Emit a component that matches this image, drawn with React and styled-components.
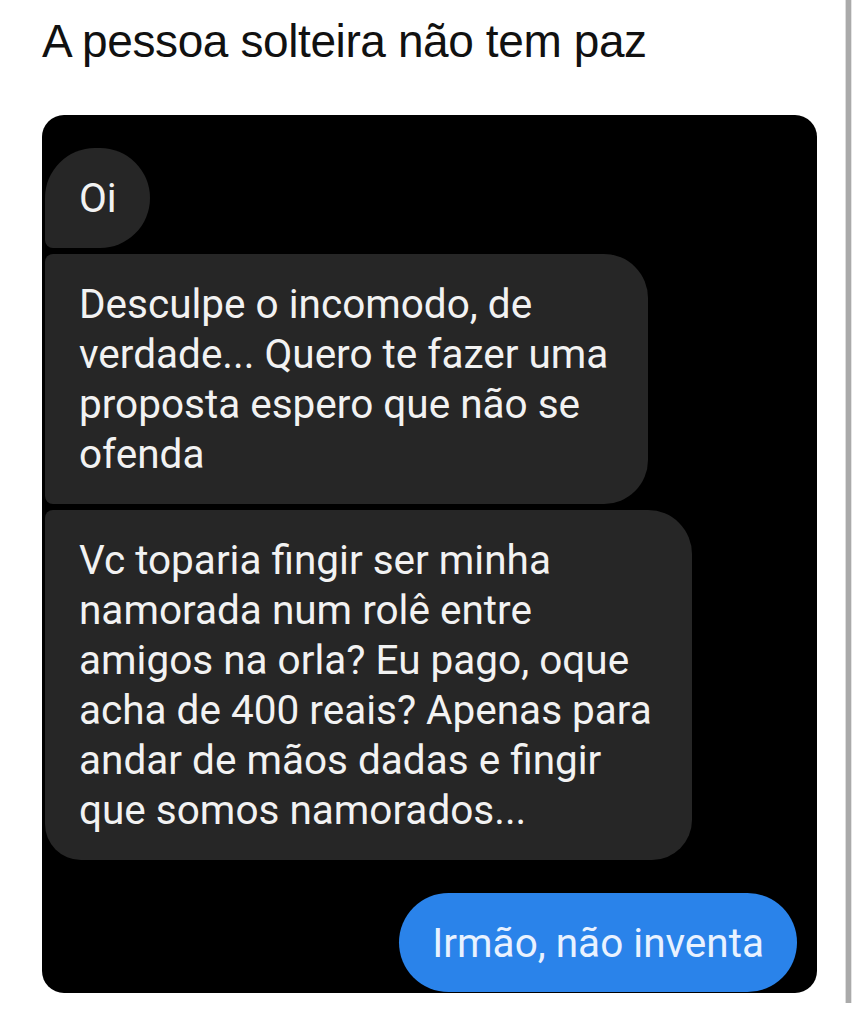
import styled, { createGlobalStyle } from 'styled-components';

const GlobalStyle = createGlobalStyle`
  html, body {
    margin: 0;
    padding: 0;
    background: #ffffff;
  }
  * {
    box-sizing: border-box;
  }
`;

const messages = [
  { id: 1, kind: 'first', lines: ['Oi'] },
  { id: 2, kind: 'middle', lines: ['Desculpe o incomodo, de', 'verdade... Quero te fazer uma', 'proposta espero que não se', 'ofenda'] },
  { id: 3, kind: 'last', lines: ['Vc toparia fingir ser minha', 'namorada num rolê entre', 'amigos na orla? Eu pago, oque', 'acha de 400 reais? Apenas para', 'andar de mãos dadas e fingir', 'que somos namorados...'] },
];

const corners = {
  first: '50px 50px 50px 8px',
  middle: '8px 44px 44px 8px',
  last: '8px 44px 40px 36px',
};

const padRight = {
  first: 33,
  middle: 40,
  last: 40,
};

export default function App() {
  return (
    <Page>
      <GlobalStyle />
      <Content>
        <Title>A pessoa solteira não tem paz</Title>
        <Chat>
          <Incoming>
            {messages.map(m => (
              <Bubble key={m.id} $corners={corners[m.kind]} $padRight={padRight[m.kind]}>
                {m.lines.map((line, i) => (
                  <Line key={i}>{line}</Line>
                ))}
              </Bubble>
            ))}
          </Incoming>
          <Outgoing>
            <SentBubble>Irmão, não inventa</SentBubble>
          </Outgoing>
        </Chat>
      </Content>
      <ScrollRail />
    </Page>
  );
}

const Page = styled.div`
  display: flex;
  width: 858px;
  height: 1024px;
  overflow: hidden;
`;

const Content = styled.div`
  width: 845px;
  padding: 13px 0 0 42px;
  display: flex;
  flex-direction: column;
`;

const Title = styled.h1`
  margin: 0 0 0 0;
  font-family: "Liberation Sans", Arial, sans-serif;
  font-weight: 400;
  font-size: 46px;
  line-height: 56px;
  color: #111111;
  letter-spacing: -0.4px;
`;

const Chat = styled.div`
  margin-top: 46px;
  width: 775px;
  height: 878px;
  background: #000000;
  border-radius: 22px;
  padding: 33px 20px 1px 3px;
  display: flex;
  flex-direction: column;
  justify-content: space-between;
`;

const Incoming = styled.div`
  display: flex;
  flex-direction: column;
  align-items: flex-start;
  gap: 6px;
`;

const Bubble = styled.div`
  background: #262626;
  color: #f2f2f2;
  border-radius: ${p => p.$corners};
  padding: 25px ${p => p.$padRight}px 25px 34px;
  font-family: Roboto, "Noto Sans", sans-serif;
  font-size: 40.5px;
  line-height: 50px;
  white-space: nowrap;
`;

const Line = styled.div``;

const Outgoing = styled.div`
  display: flex;
  justify-content: flex-end;
`;

const SentBubble = styled.div`
  background: #2a83ea;
  color: #e9f2ff;
  border-radius: 50px;
  padding: 25px 33px 24px;
  font-family: Roboto, "Noto Sans", sans-serif;
  font-size: 40.5px;
  line-height: 50px;
  white-space: nowrap;
`;

const ScrollRail = styled.div`
  width: 7px;
  height: 1003px;
  background: #aaaaaa;
  border-left: 1px solid #dddddd;
  border-right: 1px solid #e4e4e4;
`;
